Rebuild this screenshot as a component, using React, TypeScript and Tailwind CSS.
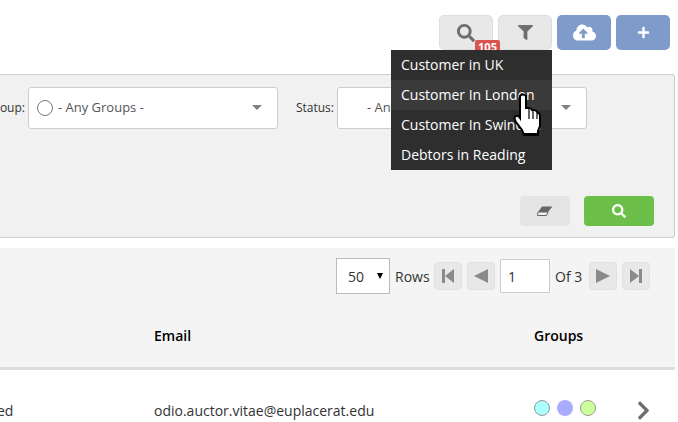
import { FaSearch, FaFilter, FaCloudUploadAlt, FaPlus, FaChevronRight } from 'react-icons/fa'

const MENU = ['Customer in UK', 'Customer In London', 'Customer In Swindon', 'Debtors in Reading']
const PAGE_BTN = 'w-7 h-7 flex items-center justify-center rounded-[4px] border border-[#e0e0e0] bg-[#e8e8e8] text-[#8a8a8a]'
const TOP_BTN = 'w-[54px] h-[35px] flex items-center justify-center rounded-[5px]'

function Caret() {
  return <span className="w-0 h-0 border-x-[5px] border-x-transparent border-t-[5px] border-t-[#808080]" />
}

function HandCursor() {
  return (
    <svg width="30" height="44" viewBox="0 0 30 44" className="absolute left-[511px] top-[93px]">
      <path
        d="M9 3 Q12 0 15 3 L15 15 L18 15 Q20 15 21 17 L23 17 Q25 17 26 19 L27 20 Q29 20 29 23 L29 33 L27 38 L27 42 L13 42 L11 37 L5 29 Q2 24 5 23 Q7 22 9 25 Z"
        fill="#fff"
        stroke="#000"
        strokeWidth="2"
      />
      <path d="M18 16 V26 M22 18 V26 M26 20 V26" stroke="#000" strokeWidth="1.2" fill="none" />
      <path d="M13 40 H27 V43 H13 Z" fill="#000" />
    </svg>
  )
}

export default function App() {
  return (
    <div className="relative w-[678px] h-[422px] overflow-hidden bg-white font-['Open_Sans',sans-serif] text-[13px] text-[#333]">
      <div className="flex justify-end gap-[5px] pt-[15px] pr-2">
        <div className={`${TOP_BTN} relative border border-[#dedede] bg-[#e8e8e8] text-[#6e6e6e]`}>
          <FaSearch size={18} />
          <span className="absolute left-[35px] top-[24px] w-[25px] h-[12px] rounded-t-[2px] bg-[#d9534f] text-center text-[11px] leading-[14px] font-bold text-white">
            105
          </span>
        </div>
        <div className={`${TOP_BTN} border border-[#dedede] bg-[#e8e8e8] text-[#6e6e6e]`}>
          <FaFilter size={15} />
        </div>
        <div className={`${TOP_BTN} bg-[#7f9bca] text-white`}>
          <FaCloudUploadAlt size={23} />
        </div>
        <div className={`${TOP_BTN} bg-[#7f9bca] text-white`}>
          <FaPlus size={13} />
        </div>
      </div>

      <div className="absolute left-[391px] top-[50px] w-[161px] bg-[#2e2e2e] z-10">
        {MENU.map((item, i) => (
          <div
            key={item}
            className={`h-[30px] pl-[10px] text-[14px] leading-[30px] text-white whitespace-nowrap ${i === 1 ? 'bg-[#3a3a3a]' : ''}`}
          >
            {item}
          </div>
        ))}
      </div>
      <div className="absolute z-20 left-0 top-0">
        <HandCursor />
      </div>

      <div className="mt-6 mr-[3px] h-[164px] rounded-r-[3px] border border-l-0 border-[#cccccc] bg-[#f1f1f1]">
        <div className="flex justify-end items-center pt-3 pr-[87px] overflow-hidden whitespace-nowrap">
          <span className="text-[12px] text-[#333] mr-[3px]">Group:</span>
          <div className="flex-none w-[250px] h-[42px] flex items-center pl-2 pr-[15px] rounded-[3px] border border-[#cccccc] bg-white">
            <span className="w-4 h-4 mr-[5px] rounded-full border border-[#777]" />
            <span className="text-[13px] text-[#555]">- Any Groups -</span>
            <span className="ml-auto flex -mt-[2px]">
              <Caret />
            </span>
          </div>
          <span className="ml-[18px] mr-[3px] text-[12px] text-[#333]">Status:</span>
          <div className="flex-none w-[250px] h-[42px] flex items-center pl-[29px] pr-[15px] rounded-[3px] border border-[#cccccc] bg-white">
            <span className="text-[13px] text-[#555]">- Any Status -</span>
            <span className="ml-auto flex -mt-[2px]">
              <Caret />
            </span>
          </div>
        </div>
        <div className="flex justify-end gap-[14px] mt-[67px] pr-5">
          <div className="w-[50px] h-[30px] flex items-center justify-center rounded-[4px] bg-[#e4e4e4]">
            <svg width="16" height="10" viewBox="0 0 16 10">
              <path d="M5 0.5H15.5L11 6H1Z" fill="#666" />
              <path d="M1 6H11L9.5 9.5H0.5Z" fill="#f1f1f1" stroke="#666" strokeWidth="1" />
            </svg>
          </div>
          <div className="w-[70px] h-[30px] flex items-center justify-center rounded-[4px] bg-[#6cc04a] text-white">
            <FaSearch size={14} />
          </div>
        </div>
      </div>

      <div className="mt-[10px] mr-[3px] h-[122px] border-b-[3px] border-[#dddddd] bg-[#f4f4f4]">
        <div className="flex justify-end items-center gap-[5px] pt-[10px] pr-[25px] text-[14px]">
          <div className="w-[54px] h-9 flex items-center justify-between pl-[11px] pr-[6px] border border-[#bbbbbb] bg-white">
            <span>50</span>
            <span className="w-0 h-0 border-x-[3px] border-x-transparent border-t-[6px] border-t-black" />
          </div>
          <span className="w-[34px]">Rows</span>
          <div className={PAGE_BTN}>
            <svg width="12" height="14" viewBox="0 0 12 14" fill="currentColor"><path d="M0 0h3v14H0zM3 7l9-7v14z" /></svg>
          </div>
          <div className={PAGE_BTN}>
            <svg width="14" height="14" viewBox="0 0 14 14" fill="currentColor"><path d="M0 7l14-7v14z" /></svg>
          </div>
          <div className="w-[50px] h-[34px] flex items-center pl-[7px] border border-[#cccccc] bg-white">1</div>
          <span className="w-[28px] whitespace-nowrap">Of 3</span>
          <div className={`${PAGE_BTN} ml-[1px]`}>
            <svg width="14" height="14" viewBox="0 0 14 14" fill="currentColor"><path d="M14 7L0 0v14z" /></svg>
          </div>
          <div className={PAGE_BTN}>
            <svg width="12" height="14" viewBox="0 0 12 14" fill="currentColor"><path d="M9 0h3v14H9zM9 7L0 0v14z" /></svg>
          </div>
        </div>
        <div className="flex mt-[31px] pl-[154px] text-[14px] font-semibold text-black">
          <span className="w-[380px]">Email</span>
          <span>Groups</span>
        </div>
      </div>

      <div className="flex items-center h-[80px] text-[14px] text-[#333]">
        <span className="w-[154px]">
          <span className="block -ml-[3px]">ed</span>
        </span>
        <span className="w-[380px]">odio.auctor.vitae@euplacerat.edu</span>
        <span className="flex gap-[7px] -mt-1">
          <span className="w-4 h-4 rounded-full border border-[#999] bg-[#aaffff]" />
          <span className="w-4 h-4 rounded-full bg-[#aaaaff]" />
          <span className="w-4 h-4 rounded-full border border-[#999] bg-[#ccff99]" />
        </span>
        <FaChevronRight size={21} className="ml-[37px] text-[#6e6e6e]" />
      </div>
    </div>
  )
}
